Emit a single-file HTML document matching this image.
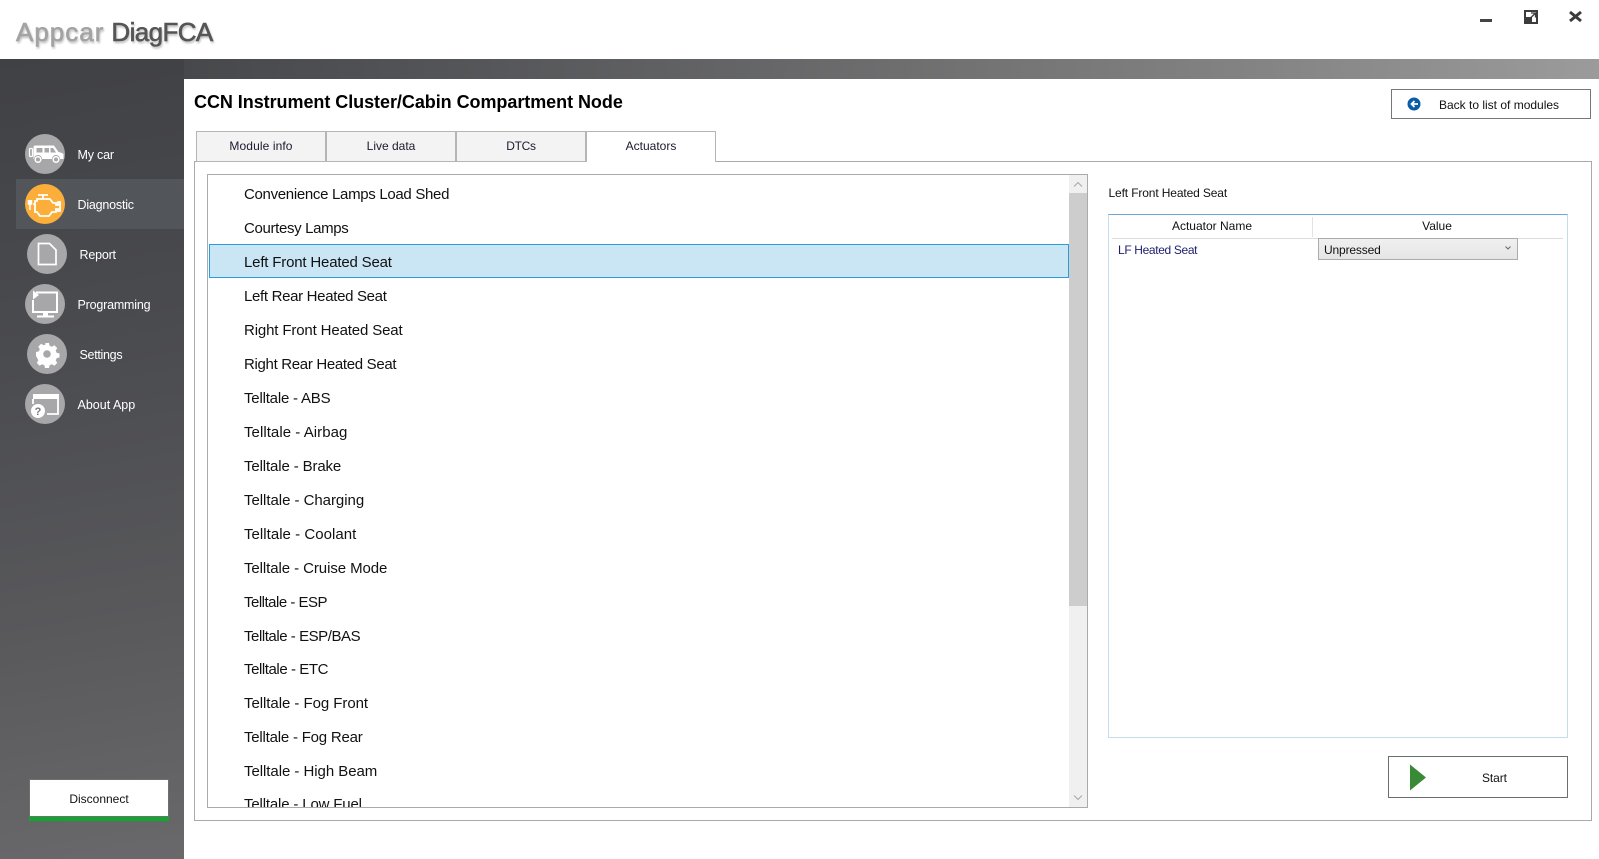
<!DOCTYPE html>
<html><head><meta charset="utf-8"><style>
html,body{margin:0;padding:0;width:1599px;height:859px;overflow:hidden;background:#fff;font-family:"Liberation Sans",sans-serif;color:#111}
div,span,svg{position:absolute;white-space:nowrap}
.band{left:0;top:59px;width:1599px;height:20px;background:linear-gradient(90deg,#434447 0,#47484b 180px,#56575a 500px,#6e6e6f 900px,#838384 1250px,#9b9b9b 1599px)}
.side{left:0;top:59px;width:184px;height:800px;background:linear-gradient(170deg,#404145 0,#4a4b4f 35%,#59595c 70%,#69696b 100%)}
.sel{left:16px;top:179px;width:168px;height:50px;background:#52555a}
.c{width:40px;height:40px}
.nav{color:#fff;font-size:12.5px;line-height:16px;letter-spacing:-.2px}
.tab{top:131px;height:29px;background:#f3f3f3;border:1px solid #b5b5b5;border-bottom:1px solid #b5b5b5;box-sizing:content-box;font-size:12px;line-height:28px;text-align:center;color:#1a1a2e}
.it{left:36px;font-size:15px;line-height:20px;color:#111;margin-top:2px}
</style></head><body>
<div style="left:16px;top:16px;font-size:26px;line-height:32px;-webkit-text-stroke:.6px;text-shadow:1px 2px 2px rgba(0,0,0,.3)"><span style="position:static;color:#a3a3a3;letter-spacing:1px;-webkit-text-stroke-color:#a3a3a3">Appcar</span><span style="position:static;color:#555;letter-spacing:-.6px;margin-left:7px;-webkit-text-stroke-color:#555">DiagFCA</span></div>
<svg style="left:1475px;top:5px" width="120" height="24" viewBox="0 0 120 24"><rect x="5" y="14" width="12" height="3" fill="#444"/><rect x="49" y="5" width="14" height="14" fill="#3c3c3c"/><path d="M51 7h10v10h-4v-5h-6z" fill="#fff"/><path d="M55 13.500l5-5M56 8h4.500v4.500" stroke="#3c3c3c" stroke-width="1.300" fill="none"/><path d="M95 7l11 9M106 7l-11 9" stroke="#3c3c3c" stroke-width="3"/></svg>
<div class="band"></div><div class="side"></div><div class="sel"></div>

<svg class="c" style="left:25px;top:134px" viewBox="0 0 40 40"><circle cx="20" cy="20" r="20" fill="#a7a7a9"/><rect x="4.500" y="14.500" width="3" height="8" rx="1" fill="none" stroke="#fff" stroke-width="1.200"/><path d="M8.500 25V13q0-1.500 2-1.500H29l4.500 6.500 3.500 1q1.500.5 1.500 2V25H35a4 4 0 0 0-8 0H17a4 4 0 0 0-8 0z" fill="#fff"/><path d="M11.500 14h6v4.500h-6zM19.500 14h4.500v4.500h-4.500zM25.500 14h2.500l3 4.500h-5.500z" fill="#a7a7a9"/><circle cx="13" cy="25.500" r="2.800" fill="none" stroke="#fff" stroke-width="1.500"/><circle cx="31" cy="25.500" r="2.800" fill="none" stroke="#fff" stroke-width="1.500"/></svg>
<svg class="c" style="left:25px;top:184px" viewBox="0 0 40 40"><circle cx="20" cy="20" r="20" fill="#fbae3a"/><path d="M13 11h10M18 11v4M12 15h13l3 4h3v2h2v-3h2v9h-2v-2h-2v3h-4l-3 4H15l-3-4h-2v-11h2z" fill="none" stroke="#fff" stroke-width="1.800"/><path d="M5 16v10M3.500 16v4h3v-4M8 20h2" fill="none" stroke="#fff" stroke-width="1.500"/></svg>
<svg class="c" style="left:26.500px;top:234px" viewBox="0 0 40 40"><circle cx="20" cy="20" r="20" fill="#a7a7a9"/><path d="M11.500 9.500h11l6.500 6.500v14.500h-17.500z" fill="none" stroke="#fff" stroke-width="1.700"/></svg>
<svg class="c" style="left:25px;top:284px" viewBox="0 0 40 40"><circle cx="20" cy="20" r="20" fill="#a7a7a9"/><path d="M11 8.500h21v19.500H8V16" fill="none" stroke="#fff" stroke-width="2"/><path d="M8 6.500l6 4.500-6 4.500z" fill="#fff"/><rect x="18" y="28" width="5" height="4" fill="#fff"/><rect x="12" y="31.500" width="17" height="2" fill="#fff"/></svg>
<svg class="c" style="left:26.500px;top:334px" viewBox="0 0 40 40"><circle cx="20" cy="20" r="20" fill="#a7a7a9"/><path d="M18 9h4l.6 2.800 2.300 1 2.500-1.500 2.800 2.800-1.500 2.500 1 2.300 2.800.6v4l-2.800.6-1 2.300 1.500 2.500-2.800 2.800-2.500-1.500-2.300 1-.6 2.800h-4l-.6-2.800-2.300-1-2.500 1.500-2.800-2.800 1.500-2.500-1-2.300L9 22v-4l2.800-.6 1-2.300-1.500-2.500 2.800-2.800 2.500 1.500 2.300-1z" fill="#fff"/><circle cx="20" cy="20" r="3.800" fill="#a7a7a9"/></svg>
<svg class="c" style="left:25px;top:384px" viewBox="0 0 40 40"><circle cx="20" cy="20" r="20" fill="#a7a7a9"/><path d="M8 10h26v5H8z" fill="#fff"/><path d="M8 15v5M33 15v15H22" fill="none" stroke="#fff" stroke-width="1.800"/><circle cx="13" cy="27" r="7" fill="#fff"/><text x="13" y="31" font-size="11" font-weight="bold" text-anchor="middle" fill="#77787a" font-family="Liberation Sans">?</text></svg>

<div class="nav" style="left:77.500px;top:147px">My car</div>
<div class="nav" style="left:77.500px;top:197px">Diagnostic</div>
<div class="nav" style="left:79.500px;top:247px">Report</div>
<div class="nav" style="left:77.500px;top:297px">Programming</div>
<div class="nav" style="left:79.500px;top:347px;letter-spacing:-.3px">Settings</div>
<div class="nav" style="left:77.500px;top:397px;letter-spacing:0">About App</div>

<div style="left:29px;top:779px;width:140px;height:38px;box-sizing:border-box;background:#fff;border:1px solid #6f6f6f;font-size:12px;line-height:39px;text-align:center;color:#111">Disconnect</div>
<div style="left:29px;top:817px;width:140px;height:4px;background:#0fa82f"></div>

<div style="left:194px;top:90px;font-size:18px;font-weight:bold;line-height:24px;color:#000;letter-spacing:-.05px">CCN Instrument Cluster/Cabin Compartment Node</div>

<div style="left:1391px;top:89px;width:200px;height:30px;box-sizing:border-box;border:1px solid #777;background:#fff"></div>
<svg style="left:1407px;top:97px" width="14" height="14" viewBox="0 0 14 14"><circle cx="7" cy="7" r="6.500" fill="#0a5ca8"/><path d="M11 7H5M7.500 4L4.500 7l3 3" fill="none" stroke="#fff" stroke-width="1.800"/></svg>
<div style="left:1439px;top:97px;font-size:12px;line-height:16px;color:#111">Back to list of modules</div>

<div style="left:194px;top:161px;width:1398px;height:660px;box-sizing:border-box;border:1px solid #aaa;background:#fff"></div>
<div class="tab" style="left:196px;width:128px;letter-spacing:.1px">Module info</div>
<div class="tab" style="left:326px;width:128px">Live data</div>
<div class="tab" style="left:456px;width:128px;letter-spacing:-.3px">DTCs</div>
<div class="tab" style="left:586px;width:128px;background:#fff;height:30px;border-bottom:none;z-index:2">Actuators</div>

<div style="left:207px;top:174px;width:881px;height:634px;box-sizing:border-box;border:1px solid #aaa;background:#fff;overflow:hidden;position:absolute">
<div style="left:1px;top:69px;width:860px;height:34px;box-sizing:border-box;background:#cae6f5;border:1px solid #26a0da"></div>
<div class="it" style="top:8px;letter-spacing:-.31px">Convenience Lamps Load Shed</div>
<div class="it" style="top:42px;letter-spacing:-.34px">Courtesy Lamps</div>
<div class="it" style="top:76px;letter-spacing:-.18px">Left Front Heated Seat</div>
<div class="it" style="top:110px;letter-spacing:-.32px">Left Rear Heated Seat</div>
<div class="it" style="top:144px;letter-spacing:-.14px">Right Front Heated Seat</div>
<div class="it" style="top:178px;letter-spacing:-.32px">Right Rear Heated Seat</div>
<div class="it" style="top:212px;letter-spacing:-.2px">Telltale - ABS</div>
<div class="it" style="top:246px;letter-spacing:.05px">Telltale - Airbag</div>
<div class="it" style="top:280px;letter-spacing:-.13px">Telltale - Brake</div>
<div class="it" style="top:314px;letter-spacing:-.04px">Telltale - Charging</div>
<div class="it" style="top:348px;letter-spacing:.03px">Telltale - Coolant</div>
<div class="it" style="top:382px;letter-spacing:-.08px">Telltale - Cruise Mode</div>
<div class="it" style="top:416px;letter-spacing:-.5px">Telltale - ESP</div>
<div class="it" style="top:450px;letter-spacing:-.45px">Telltale - ESP/BAS</div>
<div class="it" style="top:483px;letter-spacing:-.43px">Telltale - ETC</div>
<div class="it" style="top:517px;letter-spacing:-.05px">Telltale - Fog Front</div>
<div class="it" style="top:551px;letter-spacing:-.21px">Telltale - Fog Rear</div>
<div class="it" style="top:585px;letter-spacing:-.05px">Telltale - High Beam</div>
<div class="it" style="top:618px;letter-spacing:-.16px">Telltale - Low Fuel</div>
<div style="left:861px;top:0;width:18px;height:632px;background:#f0f0f0"></div>
<div style="left:861px;top:18px;width:18px;height:413px;background:#cdcdcd"></div>
<svg style="left:864px;top:5px" width="12" height="8" viewBox="0 0 12 8"><path d="M2 6.500l4-4 4 4" fill="none" stroke="#a8a8a8" stroke-width="1.100"/></svg>
<svg style="left:864px;top:619px" width="12" height="8" viewBox="0 0 12 8"><path d="M2 1.500l4 4 4-4" fill="none" stroke="#a8a8a8" stroke-width="1.100"/></svg>
</div>

<div style="left:1108.500px;top:185px;font-size:12px;line-height:16px;color:#111;letter-spacing:-.13px">Left Front Heated Seat</div>
<div style="left:1108px;top:214px;width:460px;height:524px;box-sizing:border-box;border:1px solid #c5dde9;border-top:1px solid #6fa8d0"></div>
<div style="left:1112px;top:217px;width:451px;height:21px;border-bottom:1px solid #ddd"></div>
<div style="left:1312px;top:217px;width:1px;height:20px;background:#e3e3e3"></div>
<div style="left:1112px;top:217px;width:200px;font-size:12px;line-height:18px;text-align:center;color:#111">Actuator Name</div>
<div style="left:1312px;top:217px;width:250px;font-size:12px;line-height:18px;text-align:center;color:#111">Value</div>
<div style="left:1118px;top:242px;font-size:12px;line-height:16px;color:#1d1d6e;letter-spacing:-.35px">LF Heated Seat</div>
<div style="left:1318px;top:238px;width:200px;height:22px;box-sizing:border-box;border:1px solid #acacac;background:linear-gradient(#f0f0f0,#e5e5e5);font-size:12px;line-height:22px;padding-left:5px;color:#111;letter-spacing:-.15px">Unpressed</div>
<svg style="left:1504px;top:245px" width="8" height="6" viewBox="0 0 8 6"><path d="M1.500 1.500l2.500 2.500 2.500-2.500" fill="none" stroke="#666" stroke-width="1"/></svg>

<div style="left:1388px;top:756px;width:180px;height:42px;box-sizing:border-box;border:1px solid #6d6d6d;background:#fff"></div>
<svg style="left:1409px;top:764px" width="18" height="27" viewBox="0 0 18 27"><path d="M1 0.500L17 13.500 1 26.500z" fill="#388a36"/></svg>
<div style="left:1482px;top:770px;font-size:12px;line-height:16px;color:#111;letter-spacing:-.1px">Start</div>
</body></html>
